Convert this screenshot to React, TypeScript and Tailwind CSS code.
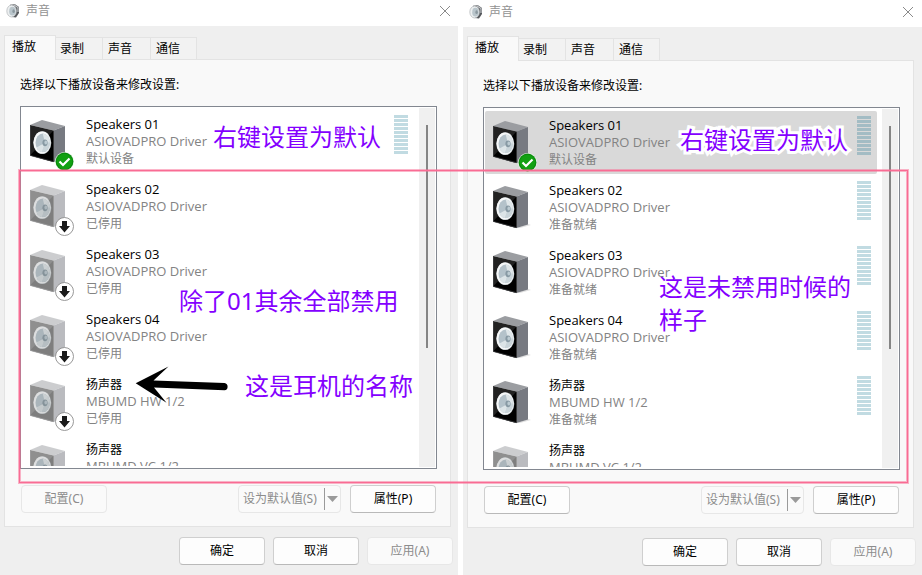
import React from 'react';

type State = 'default' | 'disabled' | 'ready' | 'absent';

interface Device {
  name: string;
  driver: string;
  status?: string;
  state: State;
}

const disabledDevices: Device[] = [
  { name: 'Speakers 01', driver: 'ASIOVADPRO Driver', status: '默认设备', state: 'default' },
  { name: 'Speakers 02', driver: 'ASIOVADPRO Driver', status: '已停用', state: 'disabled' },
  { name: 'Speakers 03', driver: 'ASIOVADPRO Driver', status: '已停用', state: 'disabled' },
  { name: 'Speakers 04', driver: 'ASIOVADPRO Driver', status: '已停用', state: 'disabled' },
  { name: '扬声器', driver: 'MBUMD HW 1/2', status: '已停用', state: 'disabled' },
  { name: '扬声器', driver: 'MBUMD VC 1/2', state: 'disabled' },
];

const readyDevices: Device[] = [
  { name: 'Speakers 01', driver: 'ASIOVADPRO Driver', status: '默认设备', state: 'default' },
  { name: 'Speakers 02', driver: 'ASIOVADPRO Driver', status: '准备就绪', state: 'ready' },
  { name: 'Speakers 03', driver: 'ASIOVADPRO Driver', status: '准备就绪', state: 'ready' },
  { name: 'Speakers 04', driver: 'ASIOVADPRO Driver', status: '准备就绪', state: 'ready' },
  { name: '扬声器', driver: 'MBUMD HW 1/2', status: '准备就绪', state: 'ready' },
  { name: '扬声器', driver: 'MBUMD VC 1/2', state: 'absent' },
];

function SpeakerIcon({ state }: { state: State }) {
  const faded = state === 'disabled' || state === 'absent';
  return (
    <svg width="46" height="52" viewBox="0 0 46 52" className="shrink-0" aria-hidden="true">
      <g opacity={faded ? 0.5 : 1}>
        <path d="M24 42 L35 38 L38 39 L27 42 Z" fill="#e0e0e0" />
        <path d="M0 5 L12 0 L35 6 L23.5 10.5 Z" fill="#9b9da1" />
        <path d="M23.5 10.5 L35 6 V38.5 L23.5 42 Z" fill="#777a81" />
        <path d="M0 5 L23.5 10.5 V42 L0 35.5 Z" fill="#222" />
        <path d="M23.5 10.5 V42 L0 35.5 Z" fill="#000" />
        <path d="M0.3 5.5 V35.5 L23.5 41.7" fill="none" stroke="#55575b" strokeWidth="0.6" />
      </g>
      <g opacity={faded ? 0.75 : 1}>
        <ellipse cx="12.3" cy="22.7" rx="9" ry="11.4" fill="#b9c0c4" />
        <ellipse cx="12.1" cy="22.6" rx="8.6" ry="11" fill="#f7f9fa" />
        <ellipse cx="12.7" cy="22.8" rx="7.2" ry="9.3" fill="#b4c2ca" />
        <path d="M12.7 13.5 A7.2 9.3 0 0 1 19.9 22.8 L15 22.8 Z" fill="#dfe6e9" />
        <path d="M19.9 22.8 A7.2 9.3 0 0 1 12 32.1 L15 22.8 Z" fill="#c9d4d9" />
        <path d="M12 32.1 A7.2 9.3 0 0 1 6.5 27.5 L15 22.8 Z" fill="#dce4e7" />
        <ellipse cx="15" cy="22.8" rx="2.6" ry="3.4" fill="#8799a3" />
        <ellipse cx="15.8" cy="22.4" rx="1.4" ry="2" fill="#bccbd2" />
      </g>
      {state === 'default' && (
        <g>
          <circle cx="34.5" cy="41.5" r="9.5" fill="#e9f3e9" />
          <circle cx="34.5" cy="41.5" r="8.9" fill="#0a8a0d" />
          <circle cx="34.5" cy="41.5" r="7.8" fill="#12a012" />
          <path d="M29.5 41.5 L33 45 L39.5 38.5" fill="none" stroke="#fff" strokeWidth="2.2" />
        </g>
      )}
      {state === 'disabled' && (
        <g>
          <circle cx="34.5" cy="41.5" r="9" fill="#fff" stroke="#8c8c8c" strokeWidth="0.9" />
          <path d="M32 36 H37 V41 H40 L34.5 47.5 L29 41 H32 Z" fill="#1a1a1a" />
        </g>
      )}
    </svg>
  );
}

function TitleIcon() {
  return (
    <svg width="14" height="14" viewBox="0 0 14 14" aria-hidden="true">
      <path d="M4 0.8 L9 0.3 L13 3 L13 9 L10 13.5 L6 13 Z" fill="#55585c" />
      <path d="M8 1 L12 3.5 L12 8" fill="none" stroke="#c4c7ca" strokeWidth="1.2" />
      <ellipse cx="5.6" cy="7" rx="4.8" ry="6" fill="#eceff0" stroke="#b0b5b8" strokeWidth="0.7" />
      <ellipse cx="6.4" cy="7.2" rx="3.2" ry="4.4" fill="#b9c5cb" />
      <ellipse cx="7.6" cy="7.2" rx="1.2" ry="1.9" fill="#8b989f" />
    </svg>
  );
}

function LevelMeter({ dim }: { dim: boolean }) {
  return (
    <div className="mt-[5px] flex w-[14px] shrink-0 flex-col gap-px" aria-hidden="true">
      {Array.from({ length: 10 }, (_, i) => (
        <span key={i} className={`h-[3px] ${dim ? 'bg-[#a3bcc4]' : 'bg-[#c1dbe2]'}`} />
      ))}
    </div>
  );
}

function DeviceRow({ device, selected }: { device: Device; selected: boolean }) {
  const metered = device.state === 'default' || device.state === 'ready';
  return (
    <li
      className={`flex h-[63px] shrink-0 gap-[10px] rounded-[2px] pr-[6px] pl-2 ${selected ? 'bg-[#d9d9d9]' : ''}`}
    >
      <div className="mt-[10px]">
        <SpeakerIcon state={device.state} />
      </div>
      <div className="min-w-0 flex-1 pt-[6px] font-['Open_Sans','Noto_Sans_CJK_SC',sans-serif] text-[13px] leading-[17px] whitespace-nowrap text-[#838383]">
        <p className="text-black">
          <span className={device.name === '扬声器' ? 'text-[12px]' : ''}>{device.name}</span>
        </p>
        <p>{device.driver}</p>
        {device.status && <p className="text-[12px]">{device.status}</p>}
      </div>
      {metered && <LevelMeter dim={selected} />}
    </li>
  );
}

function PushButton({ children, disabled = false }: { children: React.ReactNode; disabled?: boolean }) {
  return (
    <button
      type="button"
      disabled={disabled}
      className={`h-7 w-[86px] rounded border text-[12px] ${
        disabled
          ? 'border-[#e7e7e7] bg-[#fafafa] text-[#8c8c8c]'
          : 'border-[#cfcfcf] border-b-[#b9b9b9] bg-[#fdfdfd] text-black'
      }`}
    >
      {children}
    </button>
  );
}

interface DialogProps {
  devices: Device[];
  selectFirst?: boolean;
  canConfigure?: boolean;
  className?: string;
  bodyClassName?: string;
  children: React.ReactNode;
}

function SoundDialog({
  devices,
  selectFirst = false,
  canConfigure = false,
  className = '',
  bodyClassName = 'pr-[7px]',
  children,
}: DialogProps) {
  return (
    <section className={`relative flex flex-col bg-white ${className}`}>
      <header className={`flex h-[26px] items-center gap-[6px] pb-[5px] pl-[6px] ${bodyClassName}`}>
        <TitleIcon />
        <h1 className="text-[12px] leading-4 text-[#929292]">声音</h1>
        <button type="button" aria-label="关闭" className="ml-auto pr-px">
          <svg width="10" height="10" viewBox="0 0 10 10">
            <path d="M0 0 L10 10 M10 0 L0 10" stroke="#8a8a8a" strokeWidth="1" />
          </svg>
        </button>
      </header>

      <div className={`flex flex-1 flex-col bg-[#efefef] pt-[9px] pl-1 ${bodyClassName}`}>
        <div role="tablist" className="flex items-end text-[12px]">
          <button
            type="button"
            role="tab"
            aria-selected="true"
            className="z-10 -mr-px -mb-px h-[25px] w-[52px] border border-b-0 border-[#e3e3e3] bg-[#f9f9f9] pb-[2px] pl-[7px] text-left"
          >
            播放
          </button>
          {['录制', '声音', '通信'].map((tab) => (
            <button
              key={tab}
              type="button"
              role="tab"
              aria-selected="false"
              className="h-[22px] w-12 border-t border-r border-[#e3e3e3] bg-[#f2f2f2] pl-[5px] text-left first-of-type:pl-[7px] last:w-[46px]"
            >
              {tab}
            </button>
          ))}
        </div>

        <div role="tabpanel" className="border border-[#e3e3e3] bg-[#f9f9f9] px-[15px] pt-[17px] pb-[13px]">
          <p className="text-[12px] leading-4">选择以下播放设备来修改设置:</p>
          <div className="mt-[13px] -mr-[2px] flex h-[363px] overflow-hidden border border-[#828790] bg-white">
            <ul className="mr-[5px] ml-px flex h-[359px] min-w-0 flex-1 flex-col gap-[2px] overflow-hidden pt-[3px]">
              {devices.map((device, i) => (
                <DeviceRow key={i} device={device} selected={selectFirst && i === 0} />
              ))}
            </ul>
            <div className="my-px mr-px flex w-4 justify-center bg-[#f0f0f0] pt-[17px]">
              <div className="h-[223px] w-[2px] bg-[#858585]" />
            </div>
          </div>
          <div className="mt-4 -mr-px ml-px flex">
            <PushButton disabled={!canConfigure}>配置(C)</PushButton>
            <button
              type="button"
              disabled
              className="mr-[9px] ml-auto flex h-7 w-[103px] items-center rounded border border-[#e7e7e7] bg-[#fafafa] pl-1 text-[12px] text-[#8c8c8c]"
            >
              <span className="flex-1 text-left">设为默认值(S)</span>
              <span className="h-[22px] w-px bg-[#9a9a9a]" />
              <svg width="11" height="6" viewBox="0 0 11 6" className="mx-[2px]" aria-hidden="true">
                <path d="M0 0 H11 L5.5 6 Z" fill="#9a9a9a" />
              </svg>
            </button>
            <PushButton>属性(P)</PushButton>
          </div>
        </div>

        <footer className="-mr-[2px] mt-[10px] flex justify-end gap-2 pb-[9px]">
          <PushButton>确定</PushButton>
          <PushButton>取消</PushButton>
          <PushButton disabled>应用(A)</PushButton>
        </footer>
      </div>
      {children}
    </section>
  );
}

const note = 'pointer-events-none absolute z-20 text-[24px] leading-[33px] whitespace-nowrap text-[#8400ff]';

export default function App() {
  return (
    <main className="relative grid min-h-screen grid-cols-[458fr_459fr] gap-[5px] overflow-hidden bg-white font-['Noto_Sans','Noto_Sans_CJK_SC',sans-serif] text-black">
      <SoundDialog devices={disabledDevices}>
        <p className={`${note} top-[120px] left-[213px]`}>右键设置为默认</p>
        <p className={`${note} top-[284px] left-[179px]`}>除了01其余全部禁用</p>
        <p className={`${note} top-[369px] left-[245px]`}>这是耳机的名称</p>
        <svg
          width="94"
          height="38"
          viewBox="0 0 94 38"
          className="pointer-events-none absolute top-[366px] left-[135px] z-20"
          aria-hidden="true"
        >
          <path
            d="M0.7 17.3 L33.5 0.5 L18.5 14.5 L89.5 17 A3.7 3.7 0 0 1 89.5 24.3 L19 21.6 L31.5 36.8 Z"
            fill="#000"
          />
        </svg>
      </SoundDialog>

      <SoundDialog devices={readyDevices} selectFirst canConfigure className="pt-px" bodyClassName="pr-2">
        <p
          className={`${note} top-[123px] left-[217px] [paint-order:stroke_fill] [-webkit-text-stroke:6px_white]`}
        >
          右键设置为默认
        </p>
        <p className={`${note} top-[270px] left-[196px]`}>
          这是未禁用时候的
          <br />
          样子
        </p>
      </SoundDialog>

      <div className="pointer-events-none absolute top-[170px] right-[14px] left-[19px] z-10 h-[313px] border border-[#f96c94] shadow-[0_0_0_1px_#f96c9480,inset_0_0_0_1px_#f96c9480]" />
    </main>
  );
}
